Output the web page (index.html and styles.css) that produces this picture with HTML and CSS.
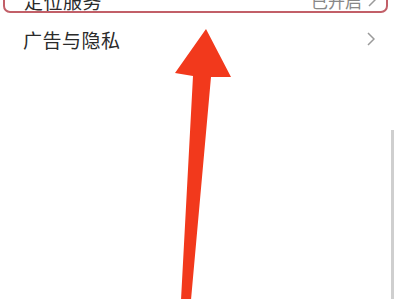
FILE: index.html
```html
<!DOCTYPE html>
<html lang="zh">
<head>
<meta charset="utf-8">
<link rel="stylesheet" href="styles.css">
</head>
<body>
<div class="page">
  <div class="list">
    <div class="row row-highlight">
      <span class="label">定位服务</span>
      <span class="value">已开启</span>
      <svg class="chev" width="8" height="14" viewBox="0 0 8 14"><polyline points="1,1 7,7 1,13" fill="none" stroke="#9a9a9a" stroke-width="1.5"/></svg>
    </div>
    <div class="row">
      <span class="label">广告与隐私</span>
      <svg class="chev" width="8" height="14" viewBox="0 0 8 14"><polyline points="1,1 7,7 1,13" fill="none" stroke="#9a9a9a" stroke-width="1.5"/></svg>
    </div>
  </div>
  <div class="scrollbar"></div>
  <svg class="arrow" width="400" height="299" viewBox="0 0 400 299">
    <polygon points="206,29 231,77 211,77 191,300 181,300 193,76 175,73" fill="#f2391c"/>
  </svg>
</div>
</body>
</html>
```
FILE: styles.css
```css
html, body {
  margin: 0;
  padding: 0;
  background: #ffffff;
}
.page {
  position: relative;
  width: 400px;
  height: 299px;
  overflow: hidden;
  font-family: "Noto Sans CJK SC", "Noto Sans", sans-serif;
  color: #2b2b2b;
}
.list {
  display: flex;
  flex-direction: column;
}
.row {
  display: flex;
  align-items: center;
  height: 52px;
  padding: 0 25px 0 23px;
  box-sizing: border-box;
}
.row-highlight {
  margin: -25px 12px 0 3px;
  height: 38px;
  padding: 12px 10px 0 19px;
  border: 2px solid #c25f68;
  border-radius: 7px;
}
.label {
  font-size: 19px;
  font-weight: 400;
  flex: 1;
  letter-spacing: 0.5px;
}
.value {
  font-size: 17px;
  color: #888888;
  margin-right: 6px;
}
.chev {
  display: block;
}
.scrollbar {
  position: absolute;
  left: 391px;
  top: 130px;
  width: 3px;
  height: 175px;
  background: #cfcfcf;
}
.arrow {
  position: absolute;
  left: 0;
  top: 0;
}
```
